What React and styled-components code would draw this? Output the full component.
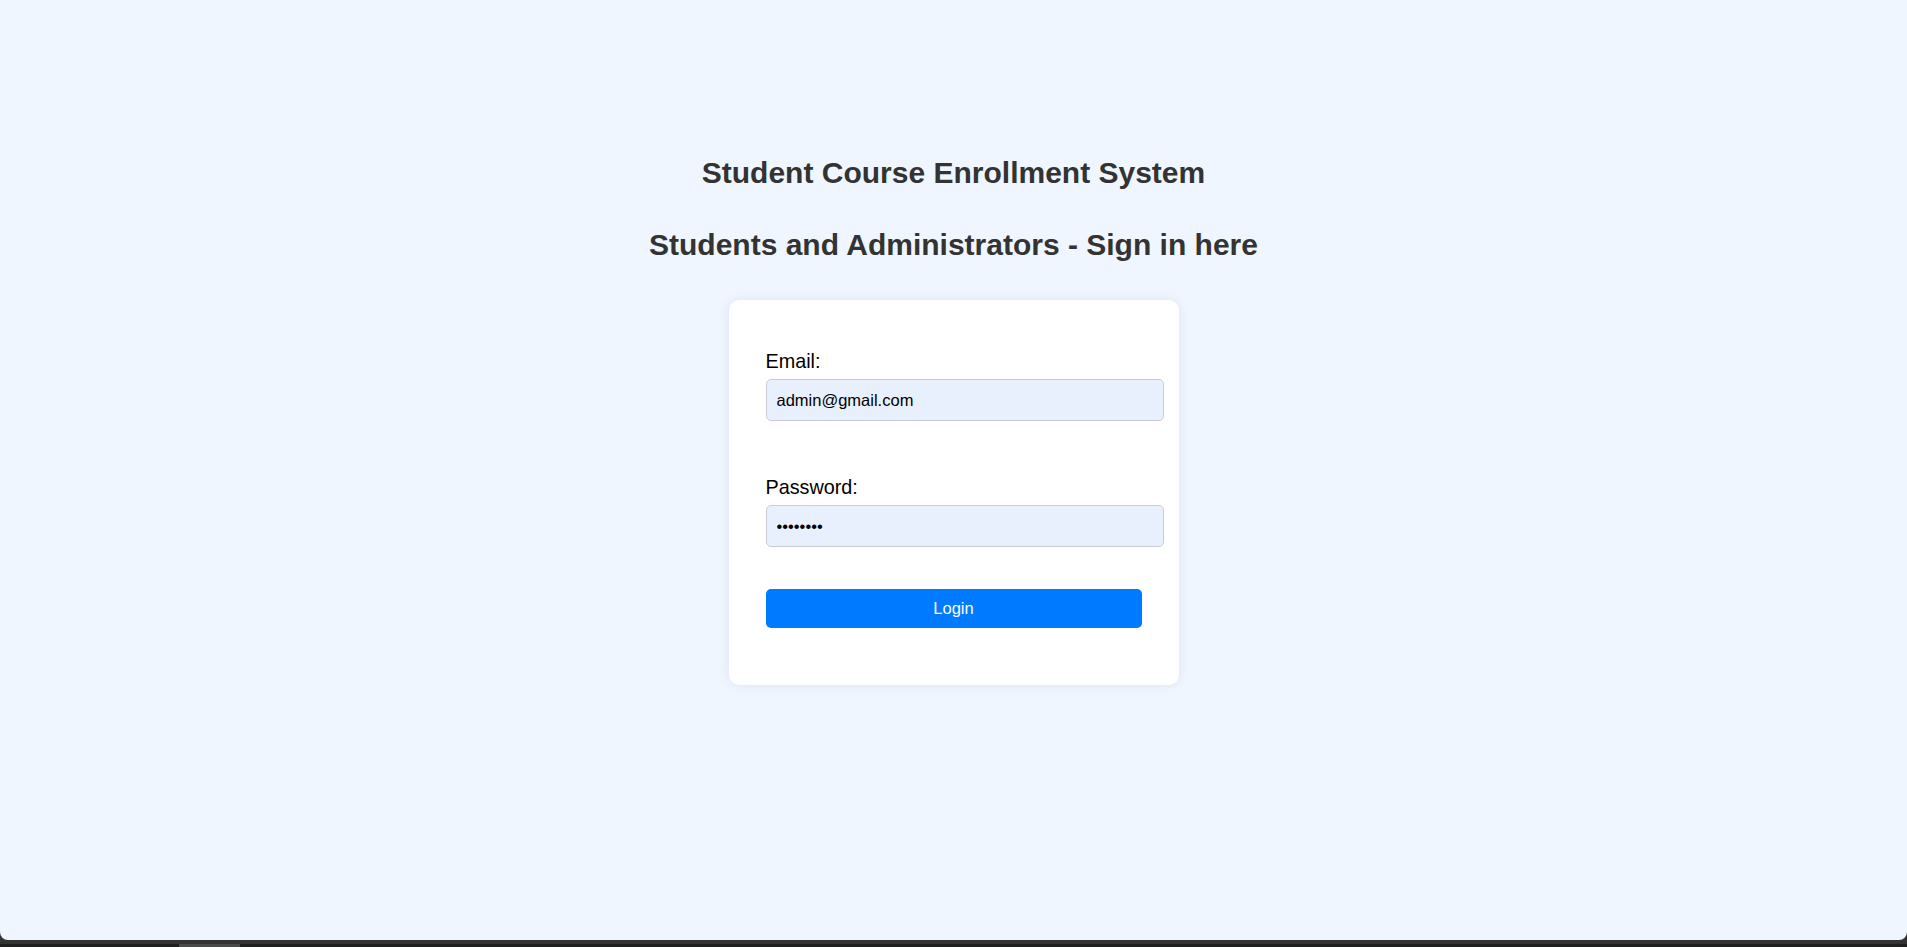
import React, { useState } from 'react';
import styled, { createGlobalStyle } from 'styled-components';

const GlobalStyle = createGlobalStyle`
  html, body {
    margin: 0;
    padding: 0;
    background: #333333;
  }
  body {
    font-family: 'Liberation Sans', Arial, sans-serif;
  }
  * {
    font-family: 'Liberation Sans', Arial, sans-serif;
  }
`;

const Page = styled.div`
  height: 940px;
  background: #eff6ff;
  border-radius: 0 0 8px 8px;
  display: flex;
  flex-direction: column;
  align-items: center;
  padding-top: 156px;
  box-sizing: border-box;
`;

const Title = styled.h2`
  margin: 0 0 ${(p) => p.gap || 0}px;
  font-size: 30px;
  line-height: 34px;
  font-weight: bold;
  color: #333333;
  text-align: center;
`;

const Card = styled.div`
  width: 450px;
  height: 385px;
  box-sizing: border-box;
  margin-top: 38.5px;
  padding: 50px 37px 0;
  background: #ffffff;
  border-radius: 10px;
  box-shadow: 0 0 12px rgba(0, 0, 0, 0.08);
`;

const Form = styled.form`
  display: flex;
  flex-direction: column;
`;

const Field = styled.div`
  display: flex;
  flex-direction: column;
  align-items: flex-start;
  margin-bottom: ${(p) => p.spacing}px;
`;

const Label = styled.label`
  display: block;
  font-size: 19.8px;
  line-height: 22px;
  color: #000000;
  margin-bottom: 7px;
`;

const Input = styled.input`
  width: 100%;
  box-sizing: content-box;
  height: 20px;
  padding: 10px;
  border: 1px solid #c9ccd4;
  border-radius: 5px;
  background: #e8f0fe;
  color: #000000;
  font-size: 16.5px;
  outline: none;
`;

const Button = styled.button`
  width: 100%;
  height: 39px;
  border: none;
  border-radius: 5px;
  background: #007bff;
  color: #ffffff;
  font-size: 16.5px;
  cursor: pointer;
`;

const BottomBar = styled.div`
  height: 7px;
  background: #333333;
  display: flex;
  align-items: flex-end;
`;

const Track = styled.div`
  flex: 1;
  height: 3px;
  background: #1f1f1f;
  display: flex;
`;

const Thumb = styled.div`
  margin-left: 179px;
  width: 61px;
  height: 3px;
  background: #4a4a4a;
`;

function App() {
  const [email, setEmail] = useState('admin@gmail.com');
  const [password, setPassword] = useState('admin123');

  return (
    <>
      <GlobalStyle />
      <Page>
        <Title gap={37.5}>Student Course Enrollment System</Title>
        <Title>Students and Administrators - Sign in here</Title>

        <Card>
          <Form onSubmit={(e) => e.preventDefault()}>
            <Field spacing={55}>
              <Label htmlFor="email">Email:</Label>
              <Input id="email" type="email" value={email} onChange={(e) => setEmail(e.target.value)} />
            </Field>
            <Field spacing={42}>
              <Label htmlFor="password">Password:</Label>
              <Input
                id="password"
                type="password"
                value={password}
                onChange={(e) => setPassword(e.target.value)}
              />
            </Field>
            <Button type="submit">Login</Button>
          </Form>
        </Card>
      </Page>
      <BottomBar>
        <Track>
          <Thumb />
        </Track>
      </BottomBar>
    </>
  );
}

export default App;
